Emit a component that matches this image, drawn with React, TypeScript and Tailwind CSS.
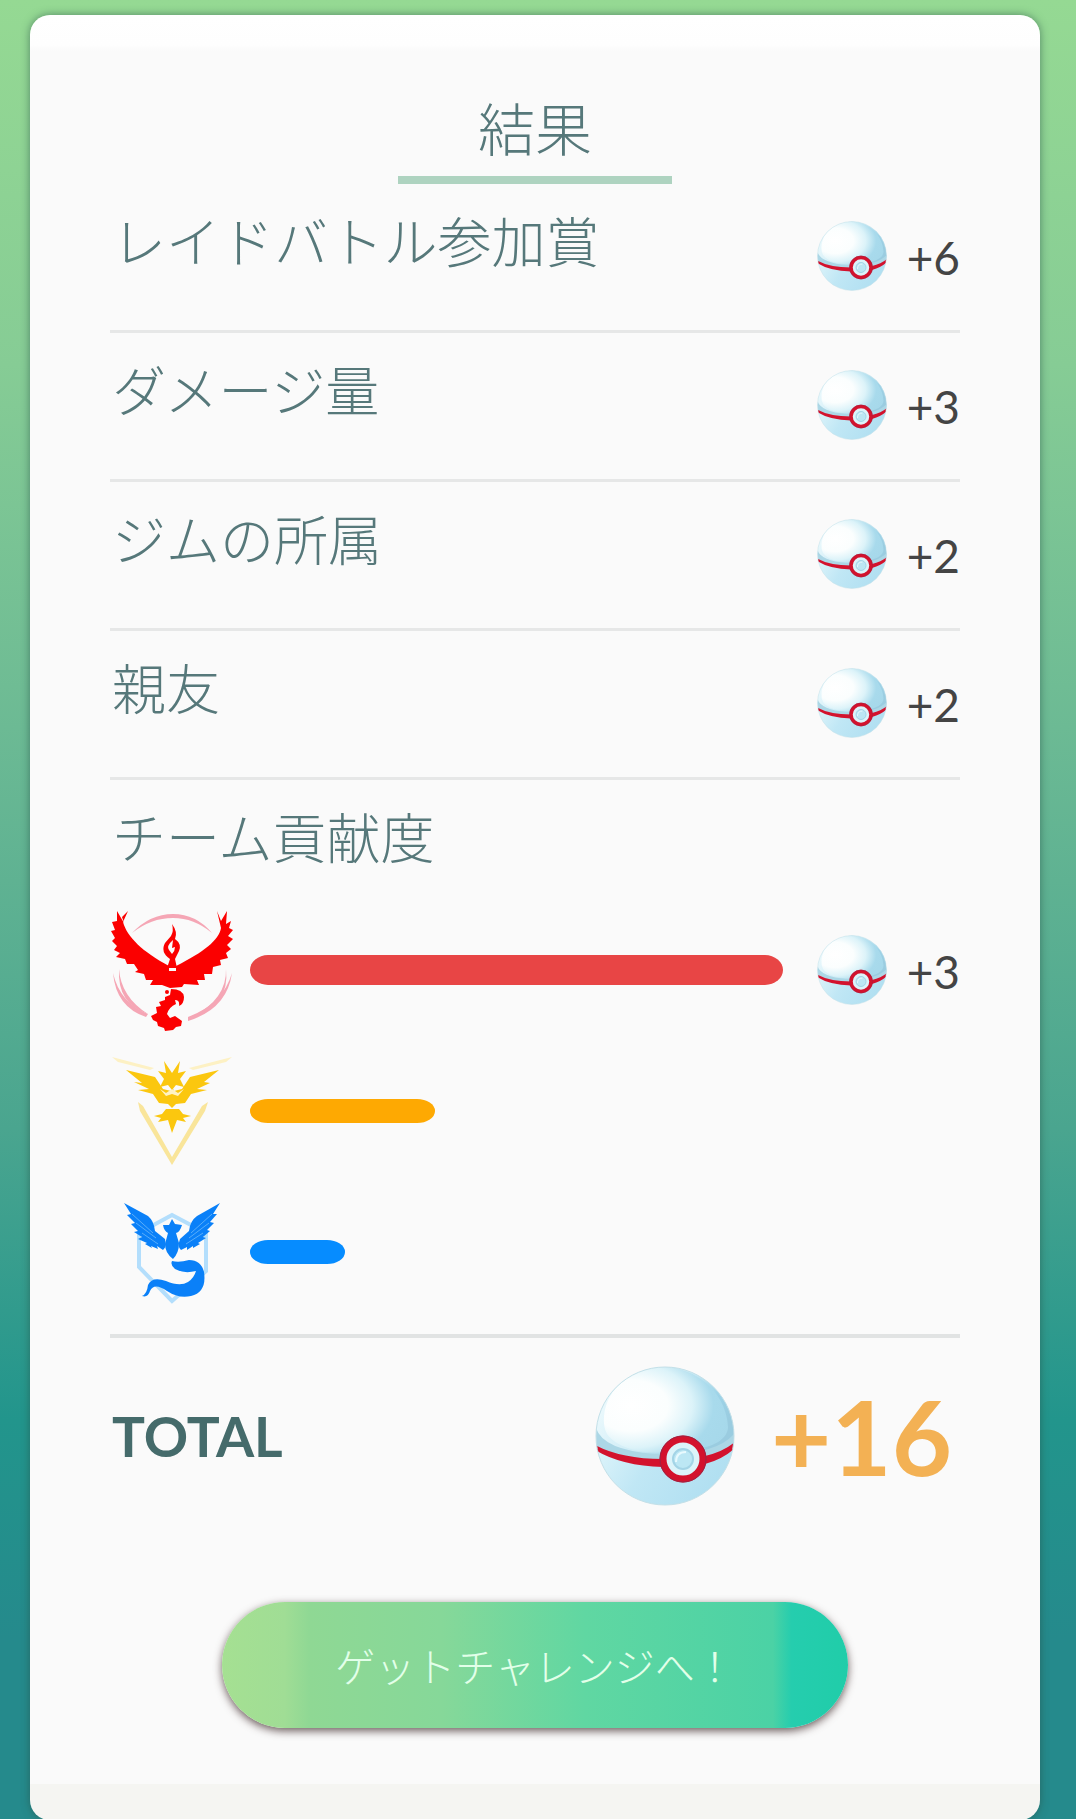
import { useId } from "react";

const rewards = [
  { label: "レイドバトル参加賞", amount: 6 },
  { label: "ダメージ量", amount: 3 },
  { label: "ジムの所属", amount: 2 },
  { label: "親友", amount: 2 },
];

function PremierBall({ className }: { className: string }) {
  const id = useId();
  return (
    <svg viewBox="0 0 140 140" className={className} aria-hidden="true">
      <defs>
        <linearGradient id={`${id}top`} x1="0.1" y1="0.2" x2="0.95" y2="0.6">
          <stop offset="0" stopColor="#eefafd" />
          <stop offset="0.5" stopColor="#cdecf6" />
          <stop offset="0.8" stopColor="#9dd3e8" />
          <stop offset="1" stopColor="#9acce0" />
        </linearGradient>
        <radialGradient id={`${id}shine`} cx="0.22" cy="0.45" r="0.85">
          <stop offset="0" stopColor="#ffffff" />
          <stop offset="0.35" stopColor="#fbfefe" />
          <stop offset="0.58" stopColor="#dcf3f9" />
          <stop offset="0.78" stopColor="#a8daec" />
          <stop offset="1" stopColor="#a6d8ea" />
        </radialGradient>
        <linearGradient id={`${id}low`} x1="0" y1="0.5" x2="0.8" y2="1">
          <stop offset="0" stopColor="#e2f6fb" />
          <stop offset="0.45" stopColor="#c0e7f5" />
          <stop offset="1" stopColor="#b0dff1" />
        </linearGradient>
        <clipPath id={`${id}clip`}>
          <circle cx="70" cy="70" r="69" />
        </clipPath>
      </defs>
      <g clipPath={`url(#${id}clip)`}>
        <rect width="140" height="140" fill={`url(#${id}low)`} />
        <path d="M0 0H140V78Q124 91 92 93Q30 96 0 80Z" fill={`url(#${id}top)`} />
        <path d="M1 62Q8 84 60 88Q120 90 139 68V78Q124 92 92 94Q30 97 0 80Z" fill="#acd7e6" />
        <path
          d="M9 50C12 20 40 1 72 1C108 4 132 32 133 61C133 72 120 82 94 84C58 91 24 85 12 68Q8 61 9 50Z"
          fill={`url(#${id}shine)`}
        />
        <path d="M0 79Q26 93 68 93V101Q26 100 0 84ZM110 90Q128 86 140 76V82Q128 93 110 98Z" fill="#d3122d" />
      </g>
      <circle cx="70" cy="70" r="69" fill="none" stroke="#c4e0e8" strokeWidth="1" />
      <circle cx="88" cy="93" r="20" fill="#dcf4fa" stroke="#d3122d" strokeWidth="7" />
      <circle cx="88" cy="93" r="23" fill="none" stroke="#9c2444" strokeWidth="1" />
      <circle cx="88" cy="93" r="10" fill="#bce7f4" stroke="#a3d4e6" strokeWidth="2" />
      <path d="M81 96Q81 86 91 86" fill="none" stroke="#e8fafe" strokeWidth="2" />
    </svg>
  );
}

function ValorLogo() {
  return (
    <svg viewBox="0 0 150 145" className="h-[145px] w-[150px] shrink-0" role="img" aria-label="Valor">
      <g fill="#f5a6b5">
        <path d="M32 36Q50 17 73 17Q96 17 112 36Q94 21 73 21Q51 21 32 36Z" />
        <path d="M13 76Q20 106 48 117L46 120Q16 110 13 76Z" />
        <path d="M19 72Q21 100 48 117Q17 107 19 72Z" />
        <path d="M132 76Q127 112 88 124L88 120Q123 107 132 76Z" />
        <path d="M126 72Q127 102 92 120Q130 109 126 72Z" />
      </g>
      <g fill="#fb0000">
        <path d="M28 14L22 20L24 26L17 14L17 24L12 25L15 33L11 34L15 41L12 44L17 49L14 53L20 56L16 60L25 62L27 67L34 67L38 73L35 75L44 77L46 83L53 83L50 88L62 88L70 91L82 90L84 87L99 88L97 83L105 83L104 77L112 77L113 70L121 68L120 63L128 61L126 56L131 52L127 48L133 42L128 39L133 33L129 31L131 24L126 27L127 14L121 24L117 14L121 31C119 43 104 55 76 69V74H69V69C43 55 27 40 23 25Z" />
        <path d="M72 27Q78 35 75 42Q82 47 79 54L75 62L77 71H67L70 62Q60 55 65 46L71 39Q74 34 72 27Z" />
        <path d="M71 92Q83 92 84 100Q84 107 79 109Q80 103 75 103L76 107Q69 110 67 117L70 121L75 119L82 124L81 129L76 130L73 133L65 134L64 131L58 129L57 125L53 123L51 119L57 116L56 110L61 109L59 105L65 103L65 100L70 98Z" />
      </g>
      <path d="M73 43Q66 49 69 53L72 57Q75 54 75 50L72 51Z" fill="#fafafa" />
      <circle cx="67" cy="95" r="2" fill="#fb0000" />
    </svg>
  );
}

function InstinctLogo() {
  return (
    <svg viewBox="0 0 150 130" className="h-[130px] w-[150px] shrink-0" role="img" aria-label="Instinct">
      <g fill="#f9e59a">
        <path d="M12 11L54 22L50 24L18 16Z" fill="#fdf1c4" />
        <path d="M132 11L89 22L93 24L126 16Z" fill="#fdf1c4" />
        <path d="M38 56L43 60L72 111L102 60L108 56L105 65L72 119L40 65Z" />
      </g>
      <g fill="#fbc70f">
        <path d="M72 27L80 15L78 27L86 25L80 33L84 41L76 39L72 44L68 39L60 41L64 33L58 25L66 27L64 15Z" />
        <path d="M26 24L55 31L63 43L71 45L72 40L74 45L82 43L90 31L119 24L104 36L110 37L97 43L107 44L91 48L85 57L76 58L72 62L68 58L59 57L53 48L38 44L49 43L34 36L42 37Z" />
        <path d="M66 63H79L83 68L91 70L83 72L86 76L77 74L72 87L68 74L58 76L61 72L54 70L62 68Z" />
      </g>
      <path d="M60 43L66 47L72 43L78 47L84 43L78 50L72 48L66 50Z" fill="#fff3c4" />
    </svg>
  );
}

function MysticLogo() {
  return (
    <svg viewBox="0 0 150 130" className="h-[130px] w-[150px] shrink-0" role="img" aria-label="Mystic">
      <path d="M72 28L106 46V84L72 114L39 80V46Z" fill="none" stroke="#b3defc" strokeWidth="4" />
      <g fill="#0a80f8">
        <path d="M24 16L48 29Q54 34 55 44L65 52Q67 60 63 63L57 59L58 62L51 59L52 61L45 57L47 56L38 52L42 50L34 45L38 44L31 37L35 36L27 28L31 27Z" />
        <path d="M120 16L97 29Q90 34 89 44L80 52Q77 60 81 63L87 60L87 63L93 59L93 61L100 57L98 56L106 51L103 50L110 44L107 43L114 36L110 35L117 27L113 27Z" />
        <path d="M72 32L75 37L82 38Q80 45 76 46L79 56Q79 66 73 72Q65 66 65 57L68 46Q64 44 63 38L69 38Z" />
        <path d="M72 74Q79 76 89 73Q101 73 104 85Q107 105 91 109Q79 112 67 104Q54 95 50 104Q48 111 42 109Q47 107 48 98Q52 89 66 94Q80 100 88 95Q94 91 96 84Q84 87 75 82Q70 78 72 74Z" />
      </g>
      <g fill="none" stroke="#58adfa" strokeWidth="1">
        <path d="M32 27L53 46M36 36L56 51M42 46L58 57M112 27L91 46M109 36L89 51M103 46L86 57" />
      </g>
    </svg>
  );
}

function Reward({ amount }: { amount: number }) {
  return (
    <div className="flex items-center gap-5">
      <PremierBall className="size-[70px]" />
      <span className="pt-1 text-[46px] leading-[48px] text-[#444]">+{amount}</span>
    </div>
  );
}

export default function App() {
  return (
    <div className="min-h-screen bg-[linear-gradient(#95d993,#86cc95_20%,#6cba94_40%,#4aa58f_62%,#22958c_78%,#258a8c_90%)] pt-[15px] pr-9 pl-[30px] font-['Lato','Noto_Sans_CJK_JP',sans-serif]">
      <main
        lang="ja"
        className="rounded-[20px] bg-[linear-gradient(#fff_0,#fefefe_30px,#fafafa_36px,#fafafa_98%,#f5f5f2_98%)] px-20 pb-[92px] text-[#56787a] shadow-[0_0_8px_rgba(40,80,70,0.6)]"
      >
        <h1 className="mx-auto w-[274px] border-b-8 border-[#aed3c0] pt-[74px] pb-[7px] text-center text-[57px] leading-[80px] font-light">
          結果
        </h1>

        <ul>
          {rewards.map((r) => (
            <li key={r.label} className="flex h-[149px] justify-between border-b-3 border-[#e6e7e7]">
              <h2 className="pt-[19px] pl-0.5 text-[54px] leading-[80px] font-light">{r.label}</h2>
              <div className="pt-[37px]">
                <Reward amount={r.amount} />
              </div>
            </li>
          ))}
        </ul>

        <section className="border-b-4 border-[#e1e3e3] pb-3">
          <h2 className="pt-[19px] pl-0.5 text-[54px] leading-[80px] font-light">チーム貢献度</h2>
          <div className="-ml-2.5 pt-5">
            <div className="flex h-[141px] items-center">
              <ValorLogo />
              <div className="mr-[34px] h-[30px] flex-1 rounded-[18px/15px] bg-[#e84545]" />
              <Reward amount={3} />
            </div>
            <div className="flex h-[141px] items-center">
              <InstinctLogo />
              <div className="h-6 w-[185px] rounded-[18px/12px] bg-[#fea902]" />
            </div>
            <div className="flex h-[141px] items-center">
              <MysticLogo />
              <div className="h-6 w-[95px] rounded-[18px/12px] bg-[#068cff]" />
            </div>
          </div>
        </section>

        <div className="flex h-[196px] items-center justify-between">
          <span className="pl-0.5 text-[55px] font-bold text-[#456b6b]">TOTAL</span>
          <div className="flex items-center gap-9 pr-2">
            <PremierBall className="size-[140px]" />
            <span className="text-[104px] leading-[120px] font-bold text-[#f3b154]">+16</span>
          </div>
        </div>

        <button
          type="button"
          className="mx-auto mt-[68px] block h-[126px] w-[626px] rounded-full bg-[linear-gradient(90deg,#a5e092_0,#a0dd95_10%,#8fd894_14%,#86d899_35%,#60d7a2_58%,#4bd2a5_88%,#25cdae_91%,#20cda9)] pt-1 text-[40px] font-light text-[#e2ffe9] shadow-[0_3px_8px_rgba(60,40,40,0.75)]"
        >
          ゲットチャレンジへ！
        </button>
      </main>
    </div>
  );
}
